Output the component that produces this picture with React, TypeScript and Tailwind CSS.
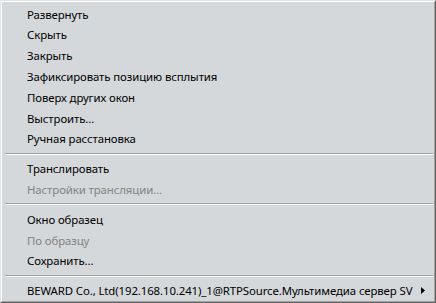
type Item = { label: string; disabled?: boolean; submenu?: boolean } | "sep";

const items: Item[] = [
  { label: "Развернуть" },
  { label: "Скрыть" },
  { label: "Закрыть" },
  { label: "Зафиксировать позицию всплытия" },
  { label: "Поверх других окон" },
  { label: "Выстроить..." },
  { label: "Ручная расстановка" },
  "sep",
  { label: "Транслировать" },
  { label: "Настройки трансляции...", disabled: true },
  "sep",
  { label: "Окно образец" },
  { label: "По образцу", disabled: true },
  { label: "Сохранить..." },
  "sep",
  { label: "BEWARD Co., Ltd(192.168.10.241)_1@RTPSource.Мультимедиа сервер SV", submenu: true },
];

export default function App() {
  return (
    <div className="w-[436px] h-[303px] border-t border-l border-[#e3e3e3] border-r border-b border-r-[#646464] border-b-[#646464] bg-[#d4d8db]">
      <div className="h-full border-t border-l border-white border-r border-b border-r-[#a0a0a0] border-b-[#a0a0a0] pt-[2px] font-['Noto_Sans','Open_Sans',sans-serif] text-[11.4px] tracking-[-0.1px] text-black">
        {items.map((it, i) =>
          it === "sep" ? (
            <div key={i} className="h-[9px] pt-[3px] pl-[3px] pr-[1px]">
              <div className="h-px bg-[#a0a0a0]" />
              <div className="h-px bg-white" />
            </div>
          ) : (
            <div
              key={i}
              className={`h-[20.8px] flex items-center pl-[25px] pr-[8px] leading-none whitespace-nowrap ${
                it.disabled ? "text-[#838383]" : "text-black"
              }`}
            >
              <span className="flex-1">{it.label}</span>
              {it.submenu && (
                <svg width="4" height="7" viewBox="0 0 4 7" className="ml-[8px] mr-[1px] shrink-0">
                  <path d="M0 0 L4 3.5 L0 7 Z" fill="#000" />
                </svg>
              )}
            </div>
          )
        )}
      </div>
    </div>
  );
}
